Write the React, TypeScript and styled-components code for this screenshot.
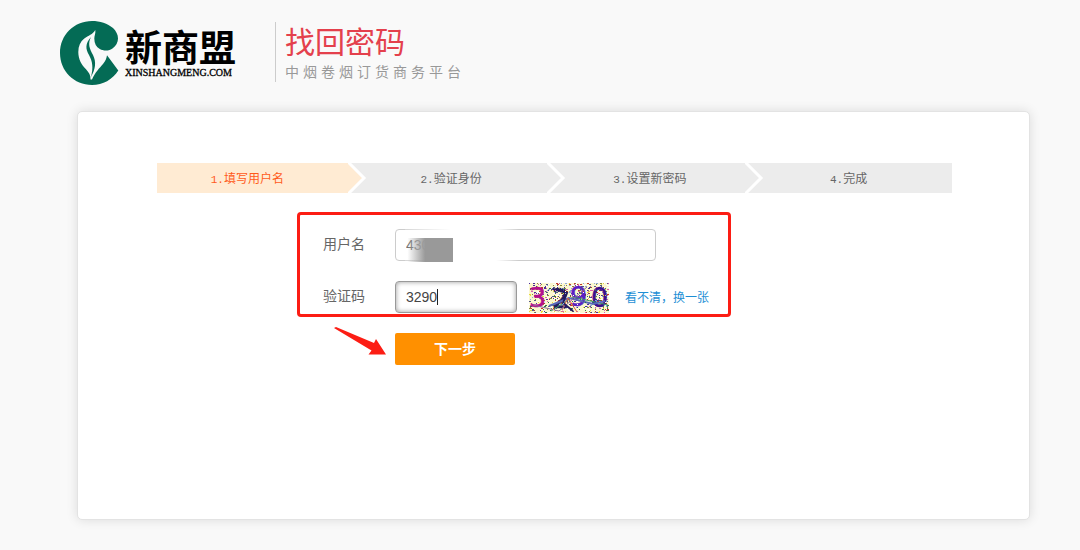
import React from "react";
import styled, { createGlobalStyle } from "styled-components";

const GlobalStyle = createGlobalStyle`
  *, *::before, *::after { box-sizing: border-box; }
  body {
    margin: 0;
    background: #f9f9f9;
    font-family: "Liberation Sans", "Noto Sans CJK SC", sans-serif;
    color: #666;
  }
`;

const Page = styled.div`
  padding: 20px 50px 30px 77px;
`;

const Header = styled.header`
  display: flex;
  align-items: flex-start;
  height: 91px;
  margin-left: -18px;
`;

const Brand = styled.a`
  display: flex;
  gap: 6px;
  color: #000;
  text-decoration: none;
`;

const BrandMark = styled.svg`
  width: 60px;
  height: 66px;
`;

const BrandText = styled.span`
  display: flex;
  flex-direction: column;
  width: 150px;
  padding-top: 6px;
`;

const BrandName = styled.span`
  font: 700 37px/40px "Noto Sans CJK SC", sans-serif;
`;

const BrandDomain = styled.span`
  font: 10px/14px "Liberation Serif", serif;
  -webkit-text-stroke: 0.3px #000;
`;

const Heading = styled.div`
  margin-top: 2px;
  padding-left: 9px;
  height: 60px;
  border-left: 1px solid #ccc;
`;

const Title = styled.h1`
  margin: 0;
  font: 400 30px/36px "Noto Sans CJK SC", sans-serif;
  color: #e4404c;
`;

const Subtitle = styled.p`
  margin: 0;
  font: 400 14px/26px "Noto Sans CJK SC", sans-serif;
  letter-spacing: 4px;
  color: #999;
`;

const Card = styled.main`
  min-height: 409px;
  padding: 51px 77px 40px 79px;
  background: #fff;
  border: 1px solid #e3e3e3;
  border-radius: 5px;
  box-shadow: 0 0 12px rgba(0, 0, 0, 0.12);
`;

const Steps = styled.ol`
  display: grid;
  grid-template-columns: repeat(4, 1fr);
  margin: 0 0 19px;
  padding: 0;
  list-style: none;
`;

const Step = styled.li<{ $active?: boolean }>`
  position: relative;
  height: 30px;
  padding-right: ${(p) => (p.$active ? 18 : 8)}px;
  text-align: center;
  font: 12px/30px "Noto Sans CJK SC", sans-serif;
  color: ${(p) => (p.$active ? "#ff5a1a" : "#666")};
  background: ${(p) => (p.$active ? "#ffebd3" : "#ececec")};
`;

const StepNumber = styled.span`
  font-family: "Liberation Mono", monospace;
  font-size: 11px;
`;

const StepArrow = styled.svg`
  position: absolute;
  z-index: 1;
  top: 0;
  right: -12px;
  width: 20px;
  height: 30px;
`;

const Form = styled.form`
  margin-left: 140px;
`;

const Fields = styled.div`
  display: flex;
  flex-direction: column;
  gap: 20px;
  width: 434px;
  padding: 14px 0 1px 23px;
  border: 3px solid #fc1d14;
  border-radius: 4px;
`;

const Row = styled.div`
  display: flex;
  align-items: center;
  height: 32px;
`;

const Label = styled.label`
  width: 72px;
  padding-bottom: 4px;
  font: 400 14px/20px "Noto Sans CJK SC", sans-serif;
  color: #666;
`;

const InputWrap = styled.div<{ $wide?: boolean }>`
  position: relative;
  width: ${(p) => (p.$wide ? 261 : 122)}px;
  height: 32px;
`;

const Input = styled.input<{ $focused?: boolean }>`
  display: block;
  width: 100%;
  height: 32px;
  padding: 0 10px;
  font: 14px "Liberation Sans", sans-serif;
  color: #444;
  background: #fff;
  outline: none;
  border: 1px solid ${(p) => (p.$focused ? "#999" : "#ccc")};
  border-radius: 4px;
  box-shadow: ${(p) => (p.$focused ? "inset 0 0 5px rgba(0, 0, 0, 0.4)" : "none")};
`;

const Caret = styled.span`
  position: absolute;
  left: 42px;
  top: 8px;
  width: 1px;
  height: 16px;
  background: #222;
`;

const Fade = styled.span`
  position: absolute;
  left: 10px;
  top: 0;
  width: 114px;
  height: 32px;
  background: linear-gradient(90deg, rgba(255, 255, 255, 0.2), #fff 40%, #fff 80%, rgba(255, 255, 255, 0));
`;

const Mask = styled.span`
  position: absolute;
  left: 10px;
  top: 9px;
  width: 48px;
  height: 24px;
  background: linear-gradient(90deg, rgba(153, 153, 153, 0) 5%, #999 42%);
`;

const CaptchaImage = styled.svg`
  width: 80px;
  height: 30px;
  margin: 2px 16px 0 12px;
  overflow: visible;
`;

const RefreshLink = styled.a`
  font: 12px/18px "Noto Sans CJK SC", sans-serif;
  color: #1e8fd5;
  text-decoration: none;
`;

const Actions = styled.div`
  display: flex;
  gap: 8px;
  margin-top: 10px;
  padding-left: 37px;
`;

const Pointer = styled.svg`
  width: 53px;
  height: 30px;
`;

const Submit = styled.button`
  width: 120px;
  height: 32px;
  margin-top: 6px;
  padding: 0 0 3px;
  font: 700 14px/20px "Noto Sans CJK SC", sans-serif;
  color: #fff;
  background: #ff9000;
  border: 0;
  border-radius: 2px;
`;

const steps = ["填写用户名", "验证身份", "设置新密码", "完成"];

const noiseColors = ["#4a2b9a", "#2a7a4a", "#c0392b", "#55558a", "#8a8a3a", "#d65fb0", "#ffffff", "#8fa8d8", "#e8d83a", "#ffffff"];

/* Speckles come from a fixed seed so the picture is stable between renders. */
function makeNoise(count: number) {
  let seed = 41;
  const next = () => {
    seed = (seed * 16807) % 2147483647;
    return seed / 2147483647;
  };
  return Array.from({ length: count }, () => ({
    x: Math.floor(next() * 79),
    y: Math.floor(next() * 30),
    w: 1 + Math.floor(next() * 2),
    fill: noiseColors[Math.floor(next() * noiseColors.length)],
  }));
}

const noise = makeNoise(560);

function Captcha() {
  return (
    <CaptchaImage viewBox="0 0 80 30" role="img" aria-label="验证码图片">
      <rect width="80" height="30" fill="#fbf8cf" />
      {noise.map((n, i) => (
        <rect key={i} x={n.x} y={n.y} width={n.w} height="1" fill={n.fill} />
      ))}
      <g fontFamily="DejaVu Sans, sans-serif" fontSize="27" strokeWidth="0.6">
        <text x="0" y="24" fill="#b3108c" stroke="#b3108c">3</text>
        <text x="23" y="25" fill="#241a5e" stroke="#241a5e">2</text>
        <text x="41" y="23" fill="#5a1fc4" stroke="#5a1fc4">9</text>
        <text x="62" y="24" fill="#3b0f8c" stroke="#3b0f8c">0</text>
      </g>
      <g fill="none" strokeWidth="1">
        <path d="M22 28 44 14 79 22" stroke="#3c9a6a" />
        <path d="M20 23 40 15 64 21 76 18" stroke="#5868b8" strokeWidth="2" />
        <path d="M32 29 39 15 48 29" stroke="#e05a3a" />
        <path d="M4 22 30 28 58 4" stroke="#8a6a9a" />
        <path d="M24 6 38 10 34 20 44 28" stroke="#241a5e" strokeWidth="2" />
      </g>
      {noise.slice(0, 110).map((n, i) => (
        <rect key={i} x={n.y * 2 + 18} y={n.x % 30} width="1" height="1" fill={n.fill} />
      ))}
    </CaptchaImage>
  );
}

export default function App() {
  return (
    <>
      <GlobalStyle />
      <Page>
        <Header>
          <Brand href="#">
            <BrandMark viewBox="0 0 60 66" aria-hidden="true">
              <path
                fill="#046b55"
                d="M33 1C15 1 1 15 1 33s14 32 32 32c11 0 20.500-5.500 26.300-14.500L48 35.300C47.500 38.500 46.500 41 44 44c-3.500 4-8 8.500-11 15.500h-1.500c.3-4-1.500-7-4.500-10.200C22.500 45 19.300 39 19.300 32c0-6 2-10.500 6-13.500 4-3 8.500-4 11-8.500.5 3.500-1 5.500-1 8.500 0 5 2 8.500 5.500 10.500 4 2.200 9.500 2 13-.8 3.200-2.500 5.200-5.700 5.200-9.700 0-4-2-7.500-5-10.500C48.500 3.500 41 1 33 1Z"
              />
              <path
                fill="#046b55"
                d="M32 17c-6 6.500-5.500 12-2 18 3.500 6.500 4.500 12.500 2 22 4.500-8 5.500-15 2-22-3.500-6.500-5.500-11-2-18Z"
              />
            </BrandMark>
            <BrandText>
              <BrandName>新商盟</BrandName>
              <BrandDomain>XINSHANGMENG.COM</BrandDomain>
            </BrandText>
          </Brand>
          <Heading>
            <Title>找回密码</Title>
            <Subtitle>中烟卷烟订货商务平台</Subtitle>
          </Heading>
        </Header>
        <Card>
          <Steps>
            {steps.map((name, i) => (
              <Step key={name} $active={i === 0} aria-current={i === 0 ? "step" : undefined}>
                <StepNumber>{i + 1}.</StepNumber>
                {name}
                {i < steps.length - 1 && (
                  <StepArrow viewBox="0 0 20 30" aria-hidden="true">
                    <path d="M0 0h20v30H0Z" fill="#ececec" />
                    <path d="M0 0h1l15 15L1 30H0Z" fill={i === 0 ? "#ffebd3" : "#ececec"} />
                    <path d="M-1-2 16 15-1 32" fill="none" stroke="#fff" strokeWidth="3" />
                  </StepArrow>
                )}
              </Step>
            ))}
          </Steps>
          <Form onSubmit={(e) => e.preventDefault()}>
            <Fields>
              <Row>
                <Label htmlFor="username">用户名</Label>
                <InputWrap $wide>
                  <Input id="username" defaultValue="430" />
                  <Fade />
                  <Mask />
                </InputWrap>
              </Row>
              <Row>
                <Label htmlFor="captcha">验证码</Label>
                <InputWrap>
                  <Input id="captcha" defaultValue="3290" $focused />
                  <Caret />
                </InputWrap>
                <Captcha />
                <RefreshLink href="#">看不清，换一张</RefreshLink>
              </Row>
            </Fields>
            <Actions>
              <Pointer viewBox="0 0 53 30" aria-hidden="true">
                <path fill="#fc1d14" d="M0 1 2 0l38 16 2-4 10 15.500H34.500l3-4Z" />
              </Pointer>
              <Submit type="submit">下一步</Submit>
            </Actions>
          </Form>
        </Card>
      </Page>
    </>
  );
}
